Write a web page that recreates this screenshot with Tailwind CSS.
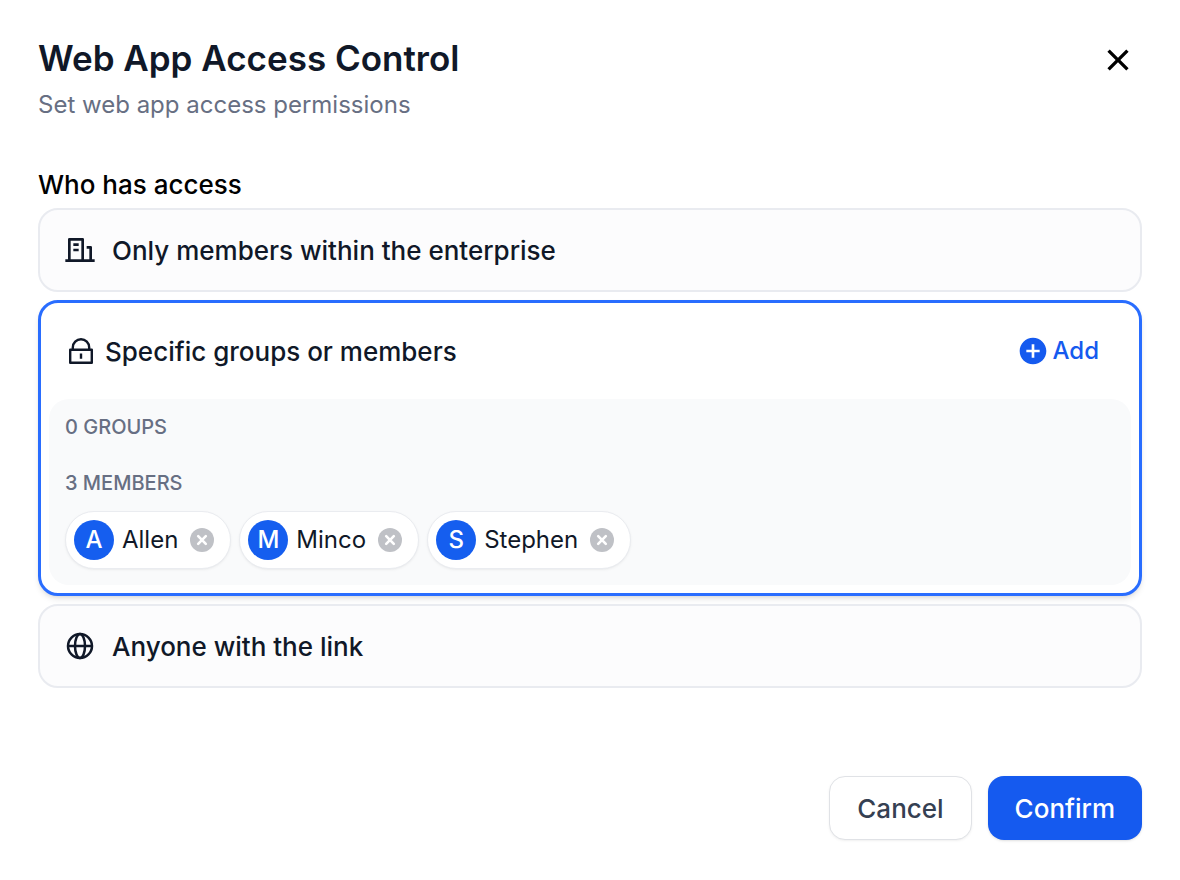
<!DOCTYPE html>
<html lang="en">
<head>
    <meta charset="UTF-8">
    <meta name="viewport" content="width=device-width, initial-scale=1.0">
    <title>Web App Access Control</title>
    <script src="https://cdn.jsdelivr.net/npm/@tailwindcss/browser@4"></script>
</head>
<body class="bg-white font-['Inter',sans-serif] text-[#101828]">
    <main class="px-[38px] pt-9 pb-10">
        <header class="flex justify-between items-start">
            <div>
                <h1 class="text-[35px] leading-11 font-semibold">Web App Access Control</h1>
                <p class="mt-1 text-2xl leading-[42px] text-[#676f83]">Set web app access permissions</p>
            </div>
            <button type="button" aria-label="Close" class="mt-1 mr-1 text-black">
                <svg class="size-10" viewBox="0 0 24 24" fill="currentColor"><path d="M12 10.586l4.95-4.95 1.414 1.414-4.95 4.95 4.95 4.95-1.414 1.414-4.95-4.95-4.95 4.95-1.414-1.414 4.95-4.95-4.95-4.95L7.05 5.636z"/></svg>
            </button>
        </header>

        <fieldset class="mt-10">
            <legend class="mb-1 text-[26px] leading-[38px] font-medium text-black">Who has access</legend>

            <div class="flex flex-col gap-2">
                <label class="relative h-21 flex items-center gap-4 px-6 rounded-[20px] border-2 border-[#e9ebf0] bg-[#fcfcfd] text-[26px] font-medium cursor-pointer">
                    <input type="radio" name="access" value="enterprise" class="sr-only">
                    <svg class="size-8" viewBox="0 0 24 24" fill="currentColor"><path d="M21 19h2v2H1v-2h2V4a1 1 0 0 1 1-1h10a1 1 0 0 1 1 1v15h4v-8h-2V9h3a1 1 0 0 1 1 1v9zM5 5v14h8V5H5zm2 6h4v2H7v-2zm0-4h4v2H7V7z"/></svg>
                    Only members within the enterprise
                </label>

                <div class="px-2 pb-2 rounded-[20px] border-3 border-[#296dff] bg-white shadow-md shadow-black/10">
                    <div class="h-24 flex items-center justify-between pl-4 pr-8">
                        <label class="relative flex items-center gap-2 text-[26px] font-medium cursor-pointer">
                            <input type="radio" name="access" value="specific" class="sr-only" checked>
                            <svg class="size-8" viewBox="0 0 32 32" fill="none" stroke="currentColor" stroke-width="2.4" stroke-linejoin="round"><path d="M5.2 14.7h21.6v13.1H5.2zM7.8 14.7v-2.2a8.2 8.2 0 0 1 16.4 0v2.2M16 18.6v5.2"/></svg>
                            Specific groups or members
                        </label>
                        <button type="button" class="flex items-center gap-1 text-2xl font-medium text-[#155aef]">
                            <svg class="size-8" viewBox="0 0 24 24" fill="currentColor"><path d="M12 22C6.477 22 2 17.523 2 12S6.477 2 12 2s10 4.477 10 10-4.477 10-10 10zm-1-11H7v2h4v4h2v-4h4v-2h-4V7h-2v4z"/></svg>
                            Add
                        </button>
                    </div>

                    <div class="p-4 rounded-[20px] bg-[#f9fafb]">
                        <h3 class="text-xl leading-6 font-medium text-[#676f83] uppercase">0 groups</h3>
                        <h3 class="mt-8 text-xl leading-6 font-medium text-[#676f83] uppercase">3 members</h3>
                        <ul class="mt-4 flex flex-wrap gap-2">
                            <li class="flex items-center p-2 pr-4 rounded-full border border-[#eaecf0] bg-white shadow-sm shadow-black/5">
                                <span class="size-10 rounded-full bg-[#155eef] flex items-center justify-center text-2xl font-medium text-white">A</span>
                                <span class="ml-2 mr-3 text-2xl">Allen</span>
                                <button type="button" aria-label="Remove Allen" class="text-[#bfc1c6]">
                                    <svg class="size-6" viewBox="0 0 24 24"><circle cx="12" cy="12" r="12" fill="currentColor"/><path d="M8.2 8.2l7.6 7.6M15.8 8.2l-7.6 7.6" stroke="white" stroke-width="2.6" stroke-linecap="round"/></svg>
                                </button>
                            </li>
                            <li class="flex items-center p-2 pr-4 rounded-full border border-[#eaecf0] bg-white shadow-sm shadow-black/5">
                                <span class="size-10 rounded-full bg-[#155eef] flex items-center justify-center text-2xl font-medium text-white">M</span>
                                <span class="ml-2 mr-3 text-2xl">Minco</span>
                                <button type="button" aria-label="Remove Minco" class="text-[#bfc1c6]">
                                    <svg class="size-6" viewBox="0 0 24 24"><circle cx="12" cy="12" r="12" fill="currentColor"/><path d="M8.2 8.2l7.6 7.6M15.8 8.2l-7.6 7.6" stroke="white" stroke-width="2.6" stroke-linecap="round"/></svg>
                                </button>
                            </li>
                            <li class="flex items-center p-2 pr-4 rounded-full border border-[#eaecf0] bg-white shadow-sm shadow-black/5">
                                <span class="size-10 rounded-full bg-[#155eef] flex items-center justify-center text-2xl font-medium text-white">S</span>
                                <span class="ml-2 mr-3 text-2xl">Stephen</span>
                                <button type="button" aria-label="Remove Stephen" class="text-[#bfc1c6]">
                                    <svg class="size-6" viewBox="0 0 24 24"><circle cx="12" cy="12" r="12" fill="currentColor"/><path d="M8.2 8.2l7.6 7.6M15.8 8.2l-7.6 7.6" stroke="white" stroke-width="2.6" stroke-linecap="round"/></svg>
                                </button>
                            </li>
                        </ul>
                    </div>
                </div>

                <label class="relative h-21 flex items-center gap-4 px-6 rounded-[20px] border-2 border-[#e9ebf0] bg-[#fcfcfd] text-[26px] font-medium cursor-pointer">
                    <input type="radio" name="access" value="anyone" class="sr-only">
                    <svg class="size-8" viewBox="0 0 32 32" fill="none" stroke="currentColor" stroke-width="2.5"><circle cx="16" cy="16" r="12"/><ellipse cx="16" cy="16" rx="5" ry="12"/><path d="M4 16h24"/></svg>
                    Anyone with the link
                </label>
            </div>
        </fieldset>

        <footer class="mt-22 flex justify-end gap-4">
            <button type="button" class="h-16 px-[27px] rounded-2xl border border-[#e0e2e6] bg-white text-[26px] font-medium text-[#354052] shadow-sm shadow-black/5">Cancel</button>
            <button type="button" class="h-16 px-[27px] rounded-2xl bg-[#155aef] text-[26px] font-medium text-white shadow-sm shadow-black/10">Confirm</button>
        </footer>
    </main>
</body>
</html>
